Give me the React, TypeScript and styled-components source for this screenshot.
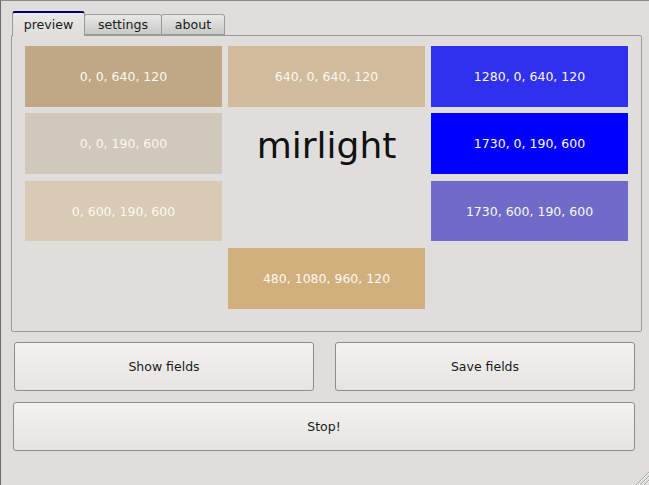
import React from "react";
import styled, { createGlobalStyle } from "styled-components";

const Global = createGlobalStyle`
  html, body { margin: 0; padding: 0; background: #dfdedc; }
  body { font-family: "DejaVu Sans", "Liberation Sans", sans-serif; }
`;

const Window = styled.div`
  position: relative;
  width: 649px;
  height: 485px;
  box-sizing: border-box;
  background: #dfdedc;
  border-left: 1px solid #6a6a6a;
  border-top: 1px solid #8a8a8a;
  padding: 10px 8px 0 10px;
  display: flex;
  flex-direction: column;
`;

const TabBar = styled.div`
  display: flex;
  align-items: flex-end;
  height: 24px;
  padding-left: 1px;
  position: relative;
  z-index: 1;
`;

const Tab = styled.div<{ $active?: boolean; $w: number }>`
  box-sizing: border-box;
  width: ${(p) => p.$w}px;
  height: ${(p) => (p.$active ? "25px" : "21px")};
  display: flex;
  align-items: center;
  justify-content: center;
  font-size: 12.6px;
  color: #1a1a1a;
  border: 1px solid #9a9a9a;
  border-bottom: ${(p) => (p.$active ? "none" : "1px solid #9a9a9a")};
  border-top: ${(p) => (p.$active ? "2px solid #00006e" : "1px solid #a0a0a0")};
  border-radius: 3px 3px 0 0;
  margin-left: ${(p) => (p.$active ? "0" : "-1px")};
  margin-bottom: ${(p) => (p.$active ? "-1px" : "0")};
  background: ${(p) =>
    p.$active
      ? "linear-gradient(#e9e8e6, #dfdedc)"
      : "linear-gradient(#e8e8e7, #c9c9c8)"};
  &:first-child { margin-left: 0; }
`;

const Pane = styled.div`
  box-sizing: border-box;
  width: 631px;
  height: 297px;
  border: 1px solid #9c9c9c;
  border-radius: 0 2px 2px 2px;
  padding: 10px 13px 0 13px;
`;

const Grid = styled.div`
  display: grid;
  grid-template-columns: 197px 197px 197px;
  grid-auto-rows: 60.6px;
  column-gap: 6px;
  row-gap: 6.8px;
`;

const Cell = styled.div<{ $bg?: string }>`
  background: ${(p) => p.$bg || "transparent"};
  display: flex;
  align-items: center;
  justify-content: center;
  color: #fbf8f2;
  font-size: 12.5px;
`;

const Title = styled.div`
  display: flex;
  align-items: center;
  justify-content: center;
  font-size: 36px;
  color: #111;
  padding-top: 3px;
`;

const Buttons = styled.div`
  margin-top: 10px;
  margin-left: 2px;
  width: 622px;
  display: flex;
  flex-direction: column;
  gap: 11px;
`;

const ButtonRow = styled.div`
  display: grid;
  grid-template-columns: 300px 300px;
  column-gap: 21px;
  padding-left: 1px;
`;

const Button = styled.button`
  box-sizing: border-box;
  height: 49px;
  border: 1px solid #8c8c8c;
  border-radius: 3px;
  background: linear-gradient(#f3f2f1, #e5e4e3);
  font-family: "DejaVu Sans", "Liberation Sans", sans-serif;
  font-size: 12.5px;
  color: #1a1a1a;
  padding: 0;
`;

const Grip = styled.svg`
  position: absolute;
  right: 0;
  bottom: 0;
`;

export default function App() {
  return (
    <>
      <Global />
      <Window>
        <TabBar>
          <Tab $active $w={73}>preview</Tab>
          <Tab $w={78}>settings</Tab>
          <Tab $w={64}>about</Tab>
        </TabBar>
        <Pane>
          <Grid>
            <Cell $bg="#c0a886">0, 0, 640, 120</Cell>
            <Cell $bg="#d0bb9c">640, 0, 640, 120</Cell>
            <Cell $bg="#3030ef">1280, 0, 640, 120</Cell>
            <Cell $bg="#d0c8bb">0, 0, 190, 600</Cell>
            <Title>mirlight</Title>
            <Cell $bg="#0000ff">1730, 0, 190, 600</Cell>
            <Cell $bg="#d8cab5">0, 600, 190, 600</Cell>
            <Cell />
            <Cell $bg="#706ac8">1730, 600, 190, 600</Cell>
            <Cell />
            <Cell $bg="#d2b07e">480, 1080, 960, 120</Cell>
            <Cell />
          </Grid>
        </Pane>
        <Buttons>
          <ButtonRow>
            <Button>Show fields</Button>
            <Button>Save fields</Button>
          </ButtonRow>
          <Button>Stop!</Button>
        </Buttons>
        <Grip width="14" height="14" viewBox="0 0 14 14">
          <g stroke="#a8a8a6" strokeWidth="1">
            <line x1="1" y1="14" x2="14" y2="1" />
            <line x1="5" y1="14" x2="14" y2="5" />
            <line x1="9" y1="14" x2="14" y2="9" />
          </g>
          <g stroke="#f4f4f2" strokeWidth="1">
            <line x1="2" y1="14" x2="14" y2="2" />
            <line x1="6" y1="14" x2="14" y2="6" />
            <line x1="10" y1="14" x2="14" y2="10" />
          </g>
        </Grip>
      </Window>
    </>
  );
}
